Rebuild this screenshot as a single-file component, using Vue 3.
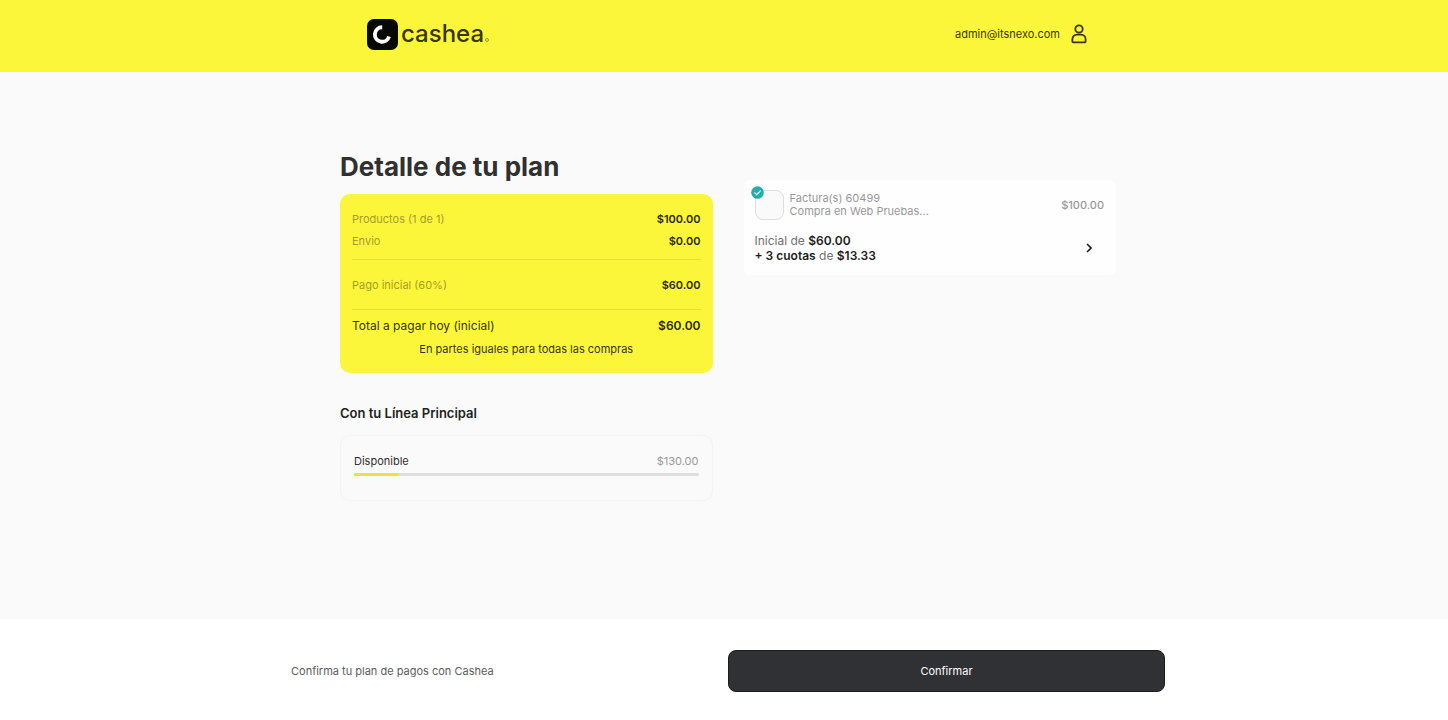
<script setup>
import { ref } from 'vue'

const costs = [
  { label: 'Productos (1 de 1)', value: '$100.00' },
  { label: 'Envio', value: '$0.00' },
]
const usedPercent = ref(13)
</script>

<template>
  <div class="page">
    <header class="topbar">
      <div class="topbar-inner">
        <a class="brand" href="#" aria-label="cashea">
          <svg width="31" height="31" viewBox="0 0 31 31" aria-hidden="true">
            <rect width="31" height="31" rx="7" fill="#080803" />
            <path d="M15.2 8.3A7.2 7.2 0 1 0 22 17.4" fill="none" stroke="#fff" stroke-width="3.9" />
          </svg>
          <span class="wordmark">cashea<span class="mark-dot"></span></span>
        </a>
        <a class="account" href="#">
          <span>admin@itsnexo.com</span>
          <svg width="16" height="20" viewBox="0 0 16 20" fill="none" stroke="#38360c" stroke-width="1.8" aria-hidden="true">
            <circle cx="8" cy="5" r="3.7" />
            <path d="M6 10.6h4a4.6 4.6 0 0 1 4.6 4.6v2.4a.8.8 0 0 1-.8.8H2.2a.8.8 0 0 1-.8-.8v-2.4A4.6 4.6 0 0 1 6 10.6Z" />
          </svg>
        </a>
      </div>
    </header>

    <main class="content">
      <section class="plan">
        <h1>Detalle de tu plan</h1>
        <div class="summary">
          <div v-for="item in costs" :key="item.label" class="row">
            <span class="muted">{{ item.label }}</span>
            <strong>{{ item.value }}</strong>
          </div>
          <div class="row initial">
            <span class="muted">Pago inicial (60%)</span>
            <strong>$60.00</strong>
          </div>
          <div class="row total">
            <span>Total a pagar hoy (inicial)</span>
            <strong>$60.00</strong>
          </div>
          <p class="note">En partes iguales para todas las compras</p>
        </div>

        <h2>Con tu Línea Principal</h2>
        <div class="credit">
          <div class="credit-row">
            <span>Disponible</span>
            <span class="amount">$130.00</span>
          </div>
          <div class="track"><div class="fill" :style="{ width: usedPercent + '%' }"></div></div>
        </div>
      </section>

      <section class="order">
        <div class="invoice">
          <div class="thumb">
            <svg class="check" width="13" height="13" viewBox="0 0 13 13" aria-hidden="true">
              <circle cx="6.5" cy="6.5" r="6.3" fill="#24aeaa" />
              <path d="m3.5 6.5 2.2 2.1 3.9-4" fill="none" stroke="#e6ffff" stroke-width="1.3" />
            </svg>
          </div>
          <div class="invoice-text">
            <div>Factura(s) 60499</div>
            <div>Compra en Web Pruebas...</div>
          </div>
          <span class="price">$100.00</span>
        </div>
        <div class="terms">
          <div>
            <div>Inicial de <strong>$60.00</strong></div>
            <div><strong>+ 3 cuotas</strong> de <strong>$13.33</strong></div>
          </div>
          <button class="expand" type="button" aria-label="Ver cuotas">
            <svg width="6" height="10" viewBox="0 0 6 10" fill="none" stroke="#1c1c1c" stroke-width="1.6" aria-hidden="true">
              <path d="m1 1 4 4-4 4" />
            </svg>
          </button>
        </div>
      </section>
    </main>

    <footer class="footer">
      <div class="footer-inner">
        <p>Confirma tu plan de pagos con Cashea</p>
        <button class="confirm" type="button">Confirmar</button>
      </div>
    </footer>
  </div>
</template>

<style>
body {
  margin: 0;
  background: #fafafa;
}
</style>

<style scoped>
.page,
.page * {
  box-sizing: border-box;
}
.page {
  display: flex;
  flex-direction: column;
  min-height: 100vh;
  color: #303030;
  font-family: Inter, "Liberation Sans", sans-serif;
  font-size: 11px;
  line-height: 16px;
}
h1,
h2,
p {
  margin: 0;
}
strong {
  font-weight: 600;
}
.topbar {
  background: #fcf63b;
}
.topbar-inner {
  display: flex;
  align-items: center;
  justify-content: space-between;
  max-width: 726px;
  margin: 0 auto;
  padding: 16px 0 20px 6px;
}
.brand {
  display: flex;
  align-items: center;
  gap: 3px;
  color: #38360c;
  text-decoration: none;
}
.wordmark {
  display: flex;
  align-items: baseline;
  font-size: 24px;
  font-weight: 500;
  line-height: 36px;
}
.mark-dot {
  width: 4px;
  height: 4px;
  margin-left: 1px;
  border: 1px solid #9c961f;
  border-radius: 50%;
}
.account {
  display: flex;
  align-items: center;
  gap: 11px;
  color: #38360c;
  text-decoration: none;
}
.content {
  display: grid;
  flex: 1;
  grid-template-columns: 1fr 1fr;
  align-items: start;
  gap: 31px;
  width: 100%;
  max-width: 784px;
  margin: 0 auto;
  padding: 76px 0 48px 8px;
}
h1 {
  font-size: 26px;
  font-weight: 700;
  line-height: 38px;
}
.summary {
  margin-top: 8px;
  padding: 14px 12px 16px;
  border-radius: 10px;
  background: #fcf63b;
  color: #38360c;
}
.row {
  display: flex;
  align-items: center;
  justify-content: space-between;
  height: 22px;
}
.muted {
  color: #a59e24;
}
.row strong {
  color: #2b290a;
}
.initial {
  height: 51px;
  margin-top: 7px;
  border-top: 1px solid #e9df35;
  border-bottom: 1px solid #e9df35;
}
.total {
  height: 32px;
  font-size: 12px;
}
.note {
  margin-top: -1px;
  text-align: center;
}
h2 {
  margin-top: 30px;
  color: #222;
  font-size: 13px;
  font-weight: 600;
  line-height: 20px;
}
.credit {
  margin-top: 12px;
  padding: 17px 13px 24px;
  border: 1px solid #f3f4f3;
  border-radius: 10px;
}
.credit-row {
  display: flex;
  justify-content: space-between;
}
.amount {
  color: #999;
}
.track {
  height: 3px;
  margin-top: 4px;
  border-radius: 2px;
  background: #dedede;
}
.fill {
  height: 100%;
  border-radius: 2px;
  background: #f4dc45;
}
.order {
  margin-top: 32px;
  padding: 10px 12px 12px 11px;
  border-radius: 6px;
  background: #fefefe;
}
.invoice {
  display: flex;
  align-items: center;
  gap: 6px;
  color: #999;
  line-height: 13px;
}
.thumb {
  position: relative;
  width: 29px;
  height: 30px;
  border: 1px solid #dedede;
  border-radius: 8px;
  background: #fafafa;
}
.check {
  position: absolute;
  top: -5px;
  left: -5px;
}
.price {
  margin-left: auto;
  font-weight: 500;
}
.terms {
  display: flex;
  align-items: center;
  justify-content: space-between;
  margin-top: 13px;
  color: #707070;
  font-size: 12px;
  line-height: 15px;
}
.terms strong {
  color: #1c1c1c;
}
.expand {
  display: flex;
  padding: 4px 12px;
  border: 0;
  background: none;
}
.footer {
  background: #fff;
}
.footer-inner {
  display: grid;
  grid-template-columns: 1fr 1fr;
  align-items: center;
  max-width: 882px;
  margin: 0 auto;
  padding: 31px 0 28px 8px;
  color: #5c5c5c;
}
.confirm {
  height: 42px;
  border: 1px solid #1b1c1e;
  border-radius: 8px;
  background: #303134;
  color: #fff;
  font: inherit;
}
</style>
